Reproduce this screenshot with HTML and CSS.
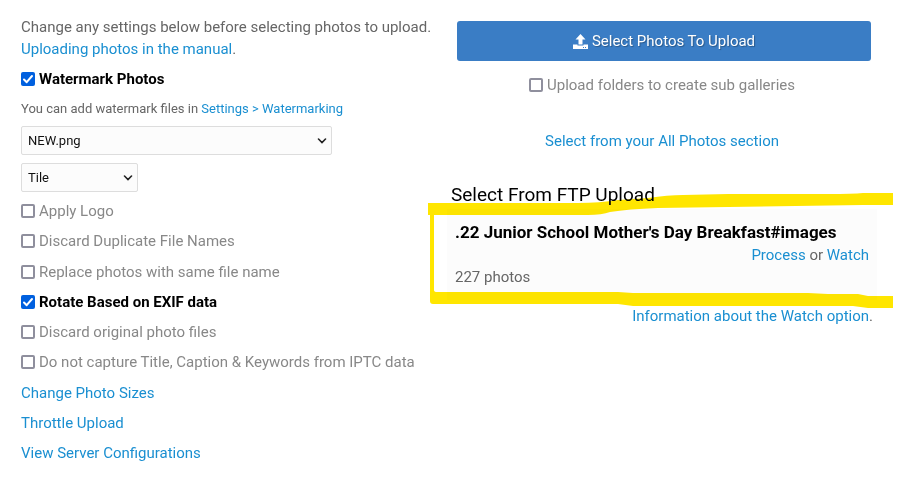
FILE: index.html
```html
<!DOCTYPE html>
<html lang="en">
<head>
<meta charset="utf-8">
<meta name="viewport" content="width=device-width, initial-scale=1">
<title>Upload Photos</title>
<link rel="stylesheet" href="styles.css">
</head>
<body>
<main class="page">
  <section class="settings">
    <p class="intro">Change any settings below before selecting photos to upload.<br><a href="#">Uploading photos in the manual</a>.</p>
    <label class="option option-on"><input type="checkbox" checked>Watermark Photos</label>
    <p class="hint">You can add watermark files in <a href="#">Settings &gt; Watermarking</a></p>
    <div class="selects">
      <select class="select select-file" aria-label="Watermark file"><option>NEW.png</option></select>
      <select class="select select-mode" aria-label="Watermark position"><option>Tile</option></select>
    </div>
    <div class="options">
      <label class="option"><input type="checkbox">Apply Logo</label>
      <label class="option"><input type="checkbox">Discard Duplicate File Names</label>
    </div>
    <div class="options options-more">
      <label class="option"><input type="checkbox">Replace photos with same file name</label>
      <label class="option option-on"><input type="checkbox" checked>Rotate Based on EXIF data</label>
      <label class="option"><input type="checkbox">Discard original photo files</label>
      <label class="option"><input type="checkbox">Do not capture Title, Caption &amp; Keywords from IPTC data</label>
    </div>
    <nav class="links">
      <a href="#">Change Photo Sizes</a>
      <a href="#">Throttle Upload</a>
      <a href="#">View Server Configurations</a>
    </nav>
  </section>

  <section class="upload">
    <button class="upload-button" type="button">
      <svg class="upload-icon" viewBox="0 0 15 15" aria-hidden="true">
        <path d="M7.500 0 12.500 5.500H9.500V10.500H5.500V5.500H2.500Z"/>
        <path d="M0 10.500H4.500V11.500H10.500V10.500H15V15H0ZM10 13V14H11V13ZM12 13V14H13V13Z" fill-rule="evenodd"/>
      </svg>
      Select Photos To Upload
    </button>
    <label class="option folders"><input type="checkbox">Upload folders to create sub galleries</label>
    <a class="all-photos" href="#">Select from your All Photos section</a>
    <h2 class="ftp-title">Select From FTP Upload</h2>
    <div class="ftp">
      <article class="ftp-card">
        <h3 class="ftp-name">.22 Junior School Mother's Day Breakfast#images</h3>
        <p class="ftp-actions"><a href="#">Process</a> or <a href="#">Watch</a></p>
        <p class="ftp-count">227 photos</p>
      </article>
      <svg class="marker" viewBox="0 0 465 116" preserveAspectRatio="none" aria-hidden="true">
        <path d="M0 10H150Q172 10 190 7L220 5Q240 2 255 2L300 1H400Q425 1 435 0H465V12H435L300 14L230 15Q200 16 182 19Q174 22 160 22H6V97Q6 99 9 99H190L205 100H380L400 101H430L440 103H465V115H440L425 113H205L190 111H5Q2 111 2 108V22H0Z"/>
      </svg>
    </div>
    <p class="watch-info"><a href="#">Information about the Watch option</a>.</p>
  </section>
</main>
</body>
</html>
```
FILE: styles.css
```css
* {
  box-sizing: border-box;
}

body {
  margin: 0;
  background: #fff;
  color: #666;
  font: 15px/22px Roboto, "Liberation Sans", sans-serif;
}

h2, h3, p {
  margin: 0;
}

a {
  color: #1a8fd1;
  text-decoration: none;
}

.page {
  display: grid;
  grid-template-columns: minmax(0, 406fr) minmax(0, 430fr);
  gap: 20px;
  padding: 16px 38px 10px 21px;
}

.intro {
  margin-bottom: 4px;
  white-space: nowrap;
}

.option {
  display: flex;
  align-items: center;
  gap: 4px;
  height: 30px;
  color: #888;
  white-space: nowrap;
}

.option-on {
  color: #000;
  font-weight: 700;
}

.option input {
  appearance: none;
  flex: none;
  width: 14px;
  height: 14px;
  margin: 0;
  border: 2px solid #8f8f9d;
  border-radius: 2px;
  background: #fff;
}

.option input:checked {
  border: 0;
  background: #0060df url("data:image/svg+xml,%3Csvg xmlns='http://www.w3.org/2000/svg' viewBox='0 0 14 14'%3E%3Cpath d='M3 7.500l2.700 2.700L11 4' fill='none' stroke='%23fff' stroke-width='2' stroke-linecap='round' stroke-linejoin='round'/%3E%3C/svg%3E") center / 14px 14px no-repeat;
}

.hint {
  font-size: 13px;
  line-height: 30px;
}

.selects {
  display: flex;
  flex-direction: column;
  gap: 8px;
  padding: 2px 0 4px;
}

.select {
  appearance: none;
  height: 29px;
  padding: 0 6px;
  border: 1px solid #ddd;
  border-radius: 2px;
  background: #fcfcfc url("data:image/svg+xml,%3Csvg xmlns='http://www.w3.org/2000/svg' width='10' height='6' viewBox='0 0 10 6'%3E%3Cpath d='M1.500 1L5 4.500 8.500 1' fill='none' stroke='%23222' stroke-width='1.600' stroke-linecap='round'/%3E%3C/svg%3E") no-repeat right 4px center;
  color: #111;
  font: 13px Roboto, "Liberation Sans", sans-serif;
}

.select-file {
  width: 311px;
}

.select-mode {
  width: 117px;
}

.options-more {
  margin-top: 1px;
}

.links {
  display: flex;
  flex-direction: column;
  margin-top: 1px;
  line-height: 30px;
}

.upload {
  display: flex;
  flex-direction: column;
}

.upload-button {
  display: flex;
  align-items: center;
  justify-content: center;
  gap: 4px;
  height: 40px;
  margin: 5px 6px 9px 10px;
  border: 0;
  border-radius: 3px;
  background: #3a7dc5;
  color: #fff;
  font: 15px Roboto, "Liberation Sans", sans-serif;
  text-shadow: 1px 1px 1px rgba(0, 0, 0, 0.3);
}

.upload-icon {
  width: 15px;
  height: 15px;
  fill: #fff;
}

.folders {
  justify-content: center;
}

.all-photos {
  margin-top: 30px;
  text-align: center;
}

.ftp-title {
  margin-top: 30px;
  padding-left: 4px;
  color: #000;
  font-size: 19px;
  font-weight: 400;
  line-height: 26px;
}

.ftp {
  position: relative;
  margin-top: 1px;
}

.ftp-card {
  padding: 12px 8px;
  background: #fcfcfc;
}

.ftp-name {
  color: #000;
  font-size: 17px;
  line-height: 23px;
}

.ftp-actions {
  text-align: right;
}

.marker {
  position: absolute;
  top: -16px;
  left: -19px;
  width: calc(100% + 35px);
  height: 116px;
  fill: #ffe600;
  mix-blend-mode: multiply;
  pointer-events: none;
}

.watch-info {
  padding: 5px 4px 0;
  text-align: right;
}
```
